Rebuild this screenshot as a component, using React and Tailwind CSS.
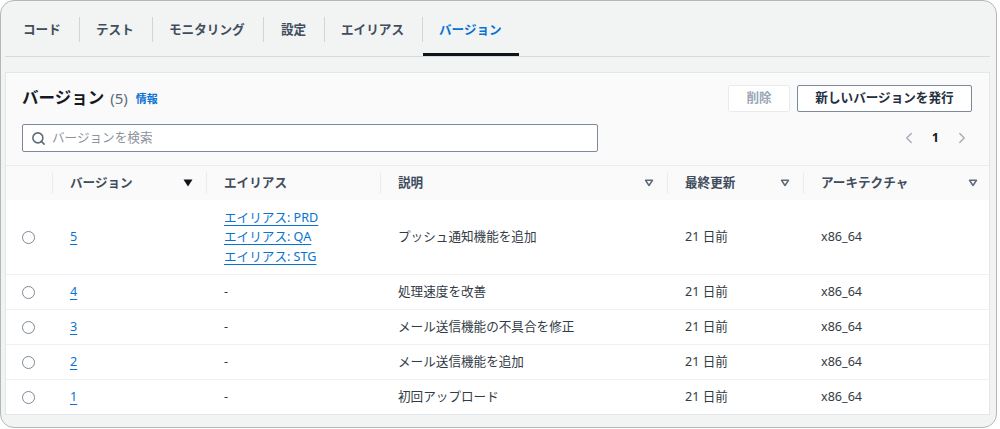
import { Search, ChevronLeft, ChevronRight } from 'lucide-react';

const FONT = { fontFamily: '"Noto Sans", "Noto Sans CJK JP", sans-serif' };

const tabs = [
  { name: 'コード', w: 'w-[74px]', pl: 'pl-[18px]' },
  { name: 'テスト', w: 'w-[72px]', pl: 'pl-[16px]' },
  { name: 'モニタリング', w: 'w-[110px]', pl: 'pl-[16px]' },
  { name: '設定', w: 'w-[60px]', pl: 'pl-[17px]' },
  { name: 'エイリアス', w: 'w-[97px]', pl: 'pl-[16px]' },
  { name: 'バージョン', w: 'w-[96px]', pl: 'pl-[16px]', active: true },
];

const versions = [
  { id: '5', aliases: ['エイリアス: PRD', 'エイリアス: QA', 'エイリアス: STG'], desc: 'プッシュ通知機能を追加' },
  { id: '4', aliases: [], desc: '処理速度を改善' },
  { id: '3', aliases: [], desc: 'メール送信機能の不具合を修正' },
  { id: '2', aliases: [], desc: 'メール送信機能を追加' },
  { id: '1', aliases: [], desc: '初回アップロード' },
];

const SortDown = ({ filled }) => (
  <svg width="10" height="8" viewBox="0 0 10 8">
    {filled ? (
      <path d="M0.5 0.5h9L5 7.5z" fill="#0f141a" />
    ) : (
      <path d="M1.5 1.25h7L5 6.5z" fill="none" stroke="#5f6b7a" strokeWidth="1.5" strokeLinejoin="round" />
    )}
  </svg>
);

const cols = 'grid grid-cols-[46px_154px_174px_287px_136px_1fr]';

const App = () => {
  return (
    <div className="w-[1000px] h-[429px] bg-white" style={FONT}>
      <div className="w-[997px] h-[428px] border border-[#b4b7ba] rounded-[14px] bg-[#f2f3f3] overflow-hidden pl-[4px] pr-[6px]">
        {/* Tabs */}
        <div className="pt-[4px] flex items-center border-b border-[#d5dbdb]">
          {tabs.map((tab, index) => (
            <div key={index} className="flex items-center">
              {index > 0 && <div className="w-px h-[25px] bg-[#d1d5db] -mt-[3px]" />}
              <div
                className={`${tab.w} ${tab.pl} h-[51px] flex items-center border-b-[3px] text-[12.6px] font-bold pt-[3px] ${
                  tab.active ? 'border-[#0f141a] text-[#0972d3]' : 'border-transparent text-[#414d5c]'
                }`}
              >
                {tab.name}
              </div>
            </div>
          ))}
        </div>

        {/* Card */}
        <div className="mt-[15px] h-[343px] bg-white border border-[#e4e7ea] overflow-hidden">
          <div className="bg-[#fafafa] px-[16px] pt-[12px] pb-[13px]">
            <div className="flex items-start justify-between">
              <div className="h-[26px] flex items-center gap-[6px]">
                <span className="text-[16.5px] font-bold text-[#16191f]">バージョン</span>
                <span className="text-[15px] text-[#5f6b7a]">(5)</span>
                <span className="text-[11px] font-bold text-[#0972d3] ml-[2px] mt-[2px]">情報</span>
              </div>
              <div className="flex items-center gap-[7px] pr-[1px]">
                <button className="w-[62px] h-[27px] bg-white border border-[#e9ebed] rounded-[2px] text-[12.6px] font-bold text-[#9ba7b6]">
                  削除
                </button>
                <button className="w-[175px] h-[27px] bg-white border border-[#7d8998] rounded-[2px] text-[12.6px] font-bold text-[#232f3e]">
                  新しいバージョンを発行
                </button>
              </div>
            </div>
            <div className="mt-[12px] flex items-center justify-between">
              <div className="w-[576px] h-[28px] bg-white border border-[#7d8998] rounded-[2px] flex items-center pl-[8px] gap-[6px]">
                <Search size={15} strokeWidth={2.5} className="text-[#5f6b7a]" />
                <span className="text-[12.6px] text-[#8c939c]">バージョンを検索</span>
              </div>
              <div className="flex items-center gap-[14px] pr-[2px]">
                <ChevronLeft size={18} strokeWidth={1.8} className="text-[#a4acb5]" />
                <span className="text-[12.6px] font-bold text-[#16191f]">1</span>
                <ChevronRight size={18} strokeWidth={1.8} className="text-[#a4acb5]" />
              </div>
            </div>
          </div>

          {/* Table header */}
          <div className={`${cols} h-[35px] bg-[#fafafa] border-t border-[#eaeded] text-[12.6px] font-bold text-[#414d5c]`}>
            <div />
            <div className="flex items-center border-l border-[#eaeded] my-[6px] pl-[17px] pr-[13px] justify-between">
              <span>バージョン</span>
              <SortDown filled />
            </div>
            <div className="flex items-center border-l border-[#eaeded] my-[6px] pl-[17px]">
              <span>エイリアス</span>
            </div>
            <div className="flex items-center border-l border-[#eaeded] my-[6px] pl-[17px] pr-[13px] justify-between">
              <span>説明</span>
              <SortDown />
            </div>
            <div className="flex items-center border-l border-[#eaeded] my-[6px] pl-[17px] pr-[13px] justify-between">
              <span>最終更新</span>
              <SortDown />
            </div>
            <div className="flex items-center border-l border-[#eaeded] my-[6px] pl-[17px] pr-[11px] justify-between">
              <span>アーキテクチャ</span>
              <SortDown />
            </div>
          </div>

          {/* Rows */}
          {versions.map((v, index) => (
            <div
              key={v.id}
              className={`${cols} text-[12.6px] text-[#333b45] ${index > 0 ? 'border-t border-[#eef0f1] h-[35px]' : 'h-[74px]'}`}
            >
              <div className="flex items-center pl-[16px]">
                <div className="w-[13px] h-[13px] rounded-full border-[1.5px] border-[#7d8998] bg-white" />
              </div>
              <div className="flex items-center pl-[18px]">
                <a className="text-[#0972d3] underline underline-offset-[3px]">{v.id}</a>
              </div>
              <div className="flex flex-col justify-center pl-[18px]">
                {v.aliases.length > 0 ? (
                  v.aliases.map((a) => (
                    <a key={a} className="text-[#0972d3] underline underline-offset-[3px] leading-[19.5px]">
                      {a}
                    </a>
                  ))
                ) : (
                  <span>-</span>
                )}
              </div>
              <div className="flex items-center pl-[18px]">{v.desc}</div>
              <div className="flex items-center pl-[18px]">21 日前</div>
              <div className="flex items-center pl-[18px]">x86_64</div>
            </div>
          ))}
        </div>
      </div>
    </div>
  );
};

export default App;
